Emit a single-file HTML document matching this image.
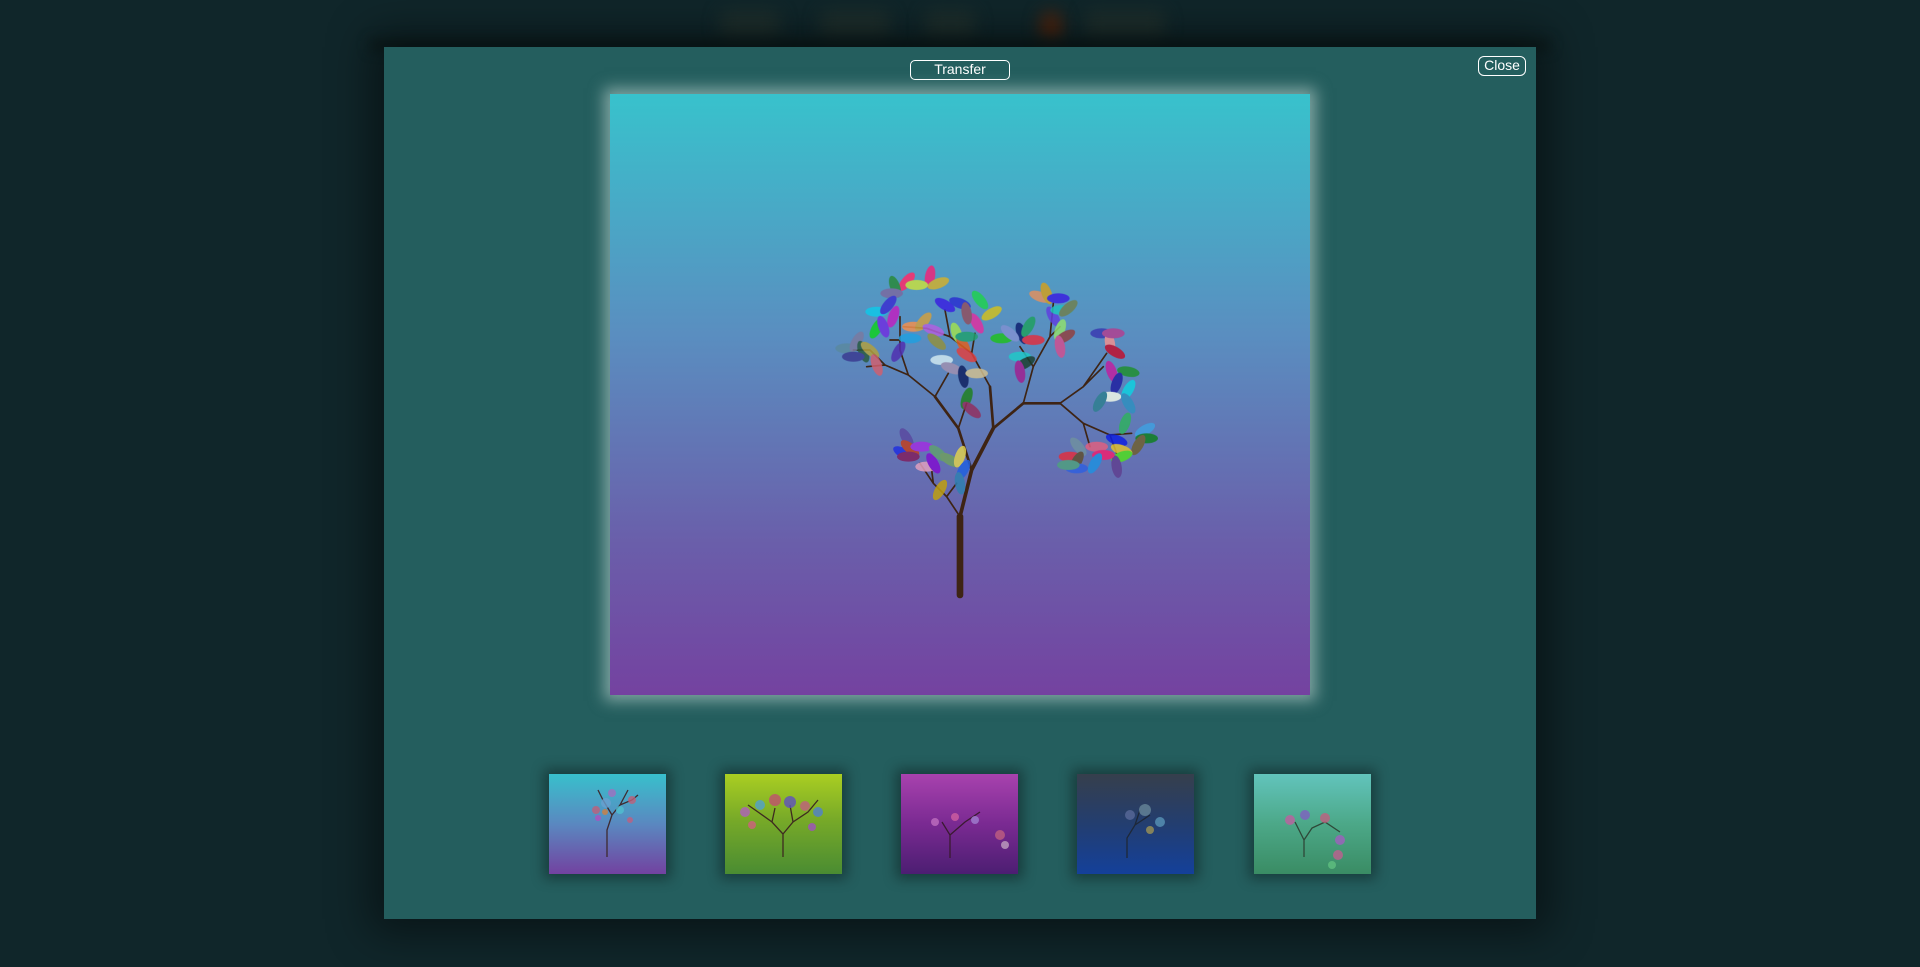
<!DOCTYPE html>
<html><head><meta charset="utf-8"><style>
html,body{margin:0;padding:0;width:1920px;height:967px;overflow:hidden;background:#10262a;font-family:"Liberation Sans",sans-serif}
.blur{position:absolute;filter:blur(8px);border-radius:8px}
.modal{position:absolute;left:384px;top:47px;width:1152px;height:872px;background:#245e5e;box-shadow:0 0 40px 14px rgba(0,0,0,.45)}
.btn{position:absolute;border:1.5px solid #fff;border-radius:5px;color:#fff;font-size:14px;text-align:center;box-sizing:border-box;line-height:17px}
.main{position:absolute;left:610px;top:94px;width:700px;height:601px;background:linear-gradient(#38c2cc,#5a8ec0 40%,#6a5eaa 75%,#7442a0);box-shadow:0 0 14px 6px rgba(200,220,215,.55)}
.th{position:absolute;top:774px;width:117px;height:100px;box-shadow:0 0 12px 5px rgba(0,0,0,.35)}
.lv ellipse{rx:34px;ry:15px}
</style></head><body>
<div class="blur" style="left:720px;top:10px;width:60px;height:30px;background:#1d2e2c"></div>
<div class="blur" style="left:820px;top:10px;width:70px;height:30px;background:#1d2e2c"></div>
<div class="blur" style="left:925px;top:10px;width:50px;height:30px;background:#1d2e2c"></div>
<div class="blur" style="left:1040px;top:12px;width:22px;height:30px;background:#4a2410"></div>
<div class="blur" style="left:1085px;top:10px;width:80px;height:30px;background:#1d2e2c"></div>
<div style="position:absolute;left:370px;top:40px;width:1180px;height:10px;background:#0c1a1a;filter:blur(6px)"></div>
<div class="modal"></div>
<div class="btn" style="left:910px;top:60px;width:100px;height:20px">Transfer</div>
<div class="btn" style="left:1478px;top:56px;width:48px;height:20px;border-radius:6px">Close</div>
<div class="main"></div>
<svg style="position:absolute;left:0;top:0" width="1920" height="967">
<g transform="translate(820,250) scale(0.3333)" stroke="#3e2414" fill="none" stroke-linecap="round" stroke-linejoin="round">
<path d="M420 1035V800" stroke-width="20"/>
<path d="M420 800L455 660L520 535" stroke-width="11"/>
<path d="M520 535L510 410M520 535L610 460L720 460" stroke-width="8"/>
<path d="M455 660L415 535L345 440" stroke-width="8"/>
<path d="M510 410L455 310L390 260L320 235L250 230M455 310L465 250M390 260L375 180M720 460L790 410L860 310M790 410L850 350M720 460L790 520L870 555L935 550M790 520L810 590M870 555L890 610M610 460L640 350L690 260L700 160M640 350L600 290M690 260L720 230M345 440L265 375L195 345L140 350M195 345L150 300L100 300M265 375L240 300L240 200M240 270L210 270M415 535L440 460M345 440L385 370M420 800L380 740L340 700L335 660M380 740L410 700M340 700L300 640" stroke-width="5"/>
</g>
<g class="lv" transform="translate(820,250) scale(0.3333)" opacity="0.85">
<ellipse cx="260" cy="95" rx="28" ry="11" fill="#ff2a6a" transform="rotate(-50 260 95)"/>
<ellipse cx="330" cy="80" rx="30" ry="12" fill="#f0247a" transform="rotate(-80 330 80)"/>
<ellipse cx="355" cy="100" rx="28" ry="10" fill="#d0b030" transform="rotate(-20 355 100)"/>
<ellipse cx="225" cy="110" rx="26" ry="10" fill="#2a8a3a" transform="rotate(70 225 110)"/>
<ellipse cx="215" cy="130" rx="26" ry="10" fill="#7a6aa0"/>
<ellipse cx="290" cy="105" rx="26" ry="10" fill="#c8e040"/>
<ellipse cx="375" cy="165" rx="30" ry="11" fill="#3a20e0" transform="rotate(30 375 165)"/>
<ellipse cx="420" cy="160" rx="28" ry="10" fill="#2a30d0" transform="rotate(20 420 160)"/>
<ellipse cx="480" cy="150" rx="30" ry="12" fill="#20d050" transform="rotate(50 480 150)"/>
<ellipse cx="515" cy="190" rx="28" ry="11" fill="#d0c020" transform="rotate(-30 515 190)"/>
<ellipse cx="470" cy="220" rx="28" ry="10" fill="#e030a0" transform="rotate(60 470 220)"/>
<ellipse cx="440" cy="190" rx="26" ry="10" fill="#905060" transform="rotate(80 440 190)"/>
<ellipse cx="170" cy="185" rx="30" ry="11" fill="#10c8e8"/>
<ellipse cx="205" cy="165" rx="26" ry="10" fill="#3a30d0" transform="rotate(-50 205 165)"/>
<ellipse cx="220" cy="200" rx="28" ry="10" fill="#c020c0" transform="rotate(-70 220 200)"/>
<ellipse cx="170" cy="235" rx="28" ry="11" fill="#10d020" transform="rotate(-60 170 235)"/>
<ellipse cx="190" cy="230" rx="26" ry="10" fill="#7030e0" transform="rotate(70 190 230)"/>
<ellipse cx="280" cy="230" rx="30" ry="11" fill="#f09050"/>
<ellipse cx="310" cy="215" rx="26" ry="10" fill="#d0a040" transform="rotate(-50 310 215)"/>
<ellipse cx="340" cy="240" rx="30" ry="11" fill="#b060e0" transform="rotate(20 340 240)"/>
<ellipse cx="270" cy="265" rx="26" ry="10" fill="#20a0e0"/>
<ellipse cx="350" cy="275" rx="28" ry="10" fill="#909040" transform="rotate(40 350 275)"/>
<ellipse cx="410" cy="250" rx="28" ry="10" fill="#a0e050" transform="rotate(70 410 250)"/>
<ellipse cx="430" cy="285" rx="28" ry="11" fill="#e06020" transform="rotate(60 430 285)"/>
<ellipse cx="440" cy="315" rx="28" ry="10" fill="#e04040" transform="rotate(30 440 315)"/>
<ellipse cx="440" cy="260" rx="24" ry="9" fill="#20a070"/>
<ellipse cx="80" cy="295" rx="30" ry="11" fill="#5a8aa0"/>
<ellipse cx="110" cy="275" rx="28" ry="10" fill="#7a7aa0" transform="rotate(-60 110 275)"/>
<ellipse cx="130" cy="305" rx="28" ry="11" fill="#2a5a40" transform="rotate(70 130 305)"/>
<ellipse cx="150" cy="300" rx="26" ry="10" fill="#b0a040" transform="rotate(40 150 300)"/>
<ellipse cx="170" cy="345" rx="26" ry="10" fill="#d06070" transform="rotate(70 170 345)"/>
<ellipse cx="100" cy="320" rx="26" ry="10" fill="#3a3a90"/>
<ellipse cx="235" cy="305" rx="26" ry="10" fill="#5030b0" transform="rotate(-60 235 305)"/>
<ellipse cx="365" cy="330" rx="30" ry="11" fill="#d0e8f0"/>
<ellipse cx="395" cy="355" rx="28" ry="10" fill="#a090b0" transform="rotate(20 395 355)"/>
<ellipse cx="430" cy="380" rx="28" ry="12" fill="#102060" transform="rotate(80 430 380)"/>
<ellipse cx="470" cy="370" rx="24" ry="10" fill="#d0c090"/>
<ellipse cx="440" cy="445" rx="28" ry="11" fill="#208020" transform="rotate(-70 440 445)"/>
<ellipse cx="455" cy="480" rx="26" ry="10" fill="#903060" transform="rotate(40 455 480)"/>
<ellipse cx="545" cy="265" rx="30" ry="11" fill="#20c020"/>
<ellipse cx="605" cy="250" rx="30" ry="12" fill="#102070" transform="rotate(70 605 250)"/>
<ellipse cx="640" cy="270" rx="28" ry="11" fill="#e03040"/>
<ellipse cx="570" cy="250" rx="26" ry="10" fill="#8090d0" transform="rotate(40 570 250)"/>
<ellipse cx="625" cy="230" rx="24" ry="10" fill="#20a060" transform="rotate(-60 625 230)"/>
<ellipse cx="600" cy="320" rx="30" ry="12" fill="#20c8c8"/>
<ellipse cx="615" cy="340" rx="28" ry="11" fill="#1a4030" transform="rotate(-30 615 340)"/>
<ellipse cx="600" cy="365" rx="24" ry="10" fill="#a02090" transform="rotate(80 600 365)"/>
<ellipse cx="660" cy="140" rx="30" ry="11" fill="#e09060" transform="rotate(20 660 140)"/>
<ellipse cx="680" cy="130" rx="28" ry="11" fill="#d0a020" transform="rotate(70 680 130)"/>
<ellipse cx="715" cy="145" rx="26" ry="10" fill="#3a20e0"/>
<ellipse cx="700" cy="200" rx="28" ry="11" fill="#6040e0" transform="rotate(60 700 200)"/>
<ellipse cx="725" cy="180" rx="26" ry="10" fill="#20c0c0"/>
<ellipse cx="745" cy="175" rx="24" ry="10" fill="#708050" transform="rotate(-40 745 175)"/>
<ellipse cx="720" cy="240" rx="30" ry="11" fill="#90e070" transform="rotate(-70 720 240)"/>
<ellipse cx="735" cy="260" rx="28" ry="11" fill="#904040" transform="rotate(-30 735 260)"/>
<ellipse cx="720" cy="290" rx="26" ry="10" fill="#d05090" transform="rotate(80 720 290)"/>
<ellipse cx="845" cy="250" rx="28" ry="10" fill="#3a3ab0"/>
<ellipse cx="870" cy="280" rx="28" ry="12" fill="#f09090" transform="rotate(80 870 280)"/>
<ellipse cx="885" cy="305" rx="26" ry="10" fill="#c01030" transform="rotate(30 885 305)"/>
<ellipse cx="880" cy="250" rx="24" ry="10" fill="#b04090"/>
<ellipse cx="875" cy="365" rx="28" ry="11" fill="#c020a0" transform="rotate(70 875 365)"/>
<ellipse cx="925" cy="365" rx="30" ry="11" fill="#209030" transform="rotate(10 925 365)"/>
<ellipse cx="890" cy="400" rx="26" ry="11" fill="#2020a0" transform="rotate(-70 890 400)"/>
<ellipse cx="870" cy="440" rx="30" ry="12" fill="#f0f8e8"/>
<ellipse cx="925" cy="420" rx="28" ry="11" fill="#10d0e0" transform="rotate(-60 925 420)"/>
<ellipse cx="925" cy="460" rx="24" ry="10" fill="#3090c0" transform="rotate(60 925 460)"/>
<ellipse cx="840" cy="455" rx="24" ry="10" fill="#308090" transform="rotate(-60 840 455)"/>
<ellipse cx="915" cy="520" rx="28" ry="11" fill="#30b060" transform="rotate(-70 915 520)"/>
<ellipse cx="975" cy="540" rx="30" ry="11" fill="#40a0e0" transform="rotate(-30 975 540)"/>
<ellipse cx="980" cy="565" rx="30" ry="11" fill="#108020"/>
<ellipse cx="955" cy="585" rx="26" ry="11" fill="#706030" transform="rotate(-60 955 585)"/>
<ellipse cx="890" cy="570" rx="28" ry="11" fill="#1020e0" transform="rotate(20 890 570)"/>
<ellipse cx="905" cy="600" rx="28" ry="11" fill="#e0c030" transform="rotate(20 905 600)"/>
<ellipse cx="905" cy="620" rx="26" ry="10" fill="#50e020" transform="rotate(-20 905 620)"/>
<ellipse cx="890" cy="650" rx="24" ry="10" fill="#604090" transform="rotate(80 890 650)"/>
<ellipse cx="830" cy="590" rx="30" ry="11" fill="#e06080"/>
<ellipse cx="850" cy="615" rx="26" ry="11" fill="#f02070"/>
<ellipse cx="825" cy="640" rx="26" ry="10" fill="#2090e0" transform="rotate(-60 825 640)"/>
<ellipse cx="775" cy="590" rx="26" ry="10" fill="#7090a0" transform="rotate(50 775 590)"/>
<ellipse cx="750" cy="620" rx="28" ry="11" fill="#e03040"/>
<ellipse cx="770" cy="635" rx="28" ry="11" fill="#605030" transform="rotate(-60 770 635)"/>
<ellipse cx="770" cy="655" rx="26" ry="10" fill="#3060e0"/>
<ellipse cx="745" cy="645" rx="22" ry="9" fill="#50a080"/>
<ellipse cx="260" cy="565" rx="28" ry="11" fill="#5a4aa0" transform="rotate(60 260 565)"/>
<ellipse cx="250" cy="610" rx="30" ry="12" fill="#2030e0" transform="rotate(30 250 610)"/>
<ellipse cx="270" cy="595" rx="28" ry="11" fill="#c04020" transform="rotate(40 270 595)"/>
<ellipse cx="265" cy="620" rx="28" ry="11" fill="#802060"/>
<ellipse cx="305" cy="590" rx="26" ry="10" fill="#a030e0"/>
<ellipse cx="320" cy="650" rx="26" ry="10" fill="#e0a0c0"/>
<ellipse cx="340" cy="640" rx="28" ry="11" fill="#8010d0" transform="rotate(60 340 640)"/>
<ellipse cx="355" cy="610" rx="28" ry="11" fill="#60a070" transform="rotate(40 355 610)"/>
<ellipse cx="390" cy="630" rx="28" ry="11" fill="#70a060" transform="rotate(30 390 630)"/>
<ellipse cx="420" cy="620" rx="28" ry="11" fill="#e0d050" transform="rotate(-70 420 620)"/>
<ellipse cx="430" cy="660" rx="26" ry="10" fill="#2060e0" transform="rotate(-60 430 660)"/>
<ellipse cx="420" cy="700" rx="24" ry="10" fill="#3080b0" transform="rotate(80 420 700)"/>
<ellipse cx="360" cy="720" rx="28" ry="11" fill="#c0a010" transform="rotate(-60 360 720)"/>
</g>
</svg>
<div class="th" style="left:549px;background:linear-gradient(#38c0cc,#5a88c0 50%,#7242a0)"></div>
<div class="th" style="left:725px;background:linear-gradient(#aace22,#78aa28 45%,#4a8c32)"></div>
<div class="th" style="left:901px;background:linear-gradient(#a842ae,#7a2a92 50%,#4c1e72)"></div>
<div class="th" style="left:1077px;background:linear-gradient(#363f4c,#233e70 50%,#14409a)"></div>
<div class="th" style="left:1254px;background:linear-gradient(#62c4bc,#4ca888 50%,#3a8c64)"></div>
<svg style="position:absolute;left:0;top:0" width="1920" height="967" fill="none" stroke-width="1.3">
<g stroke="#3e2a30"><path d="M607 857V830L612 815L620 805M612 815L603 800L598 790M620 805L628 790M620 805L632 800L638 795"/></g>
<g opacity=".8"><circle cx="596" cy="810" r="4" fill="#c0607a"/><circle cx="606" cy="803" r="5" fill="#6aa0d0"/><circle cx="598" cy="818" r="3" fill="#b050c0"/><circle cx="620" cy="810" r="4" fill="#50c0d0"/><circle cx="632" cy="800" r="4" fill="#c0607a"/><circle cx="605" cy="812" r="3" fill="#d08040"/><circle cx="612" cy="793" r="4" fill="#a070c0"/><circle cx="630" cy="820" r="3" fill="#c06080"/></g>
<g stroke="#3e2a20"><path d="M783 857V834L772 822L758 812L748 805M783 834L793 822L808 812L818 800M793 822L790 805M772 822L775 808"/></g>
<g opacity=".8"><circle cx="745" cy="812" r="5" fill="#b060c0"/><circle cx="760" cy="805" r="5" fill="#50a0d0"/><circle cx="775" cy="800" r="6" fill="#c05070"/><circle cx="790" cy="802" r="6" fill="#6050c0"/><circle cx="805" cy="806" r="5" fill="#c06080"/><circle cx="818" cy="812" r="5" fill="#5080d0"/><circle cx="752" cy="825" r="4" fill="#d06080"/><circle cx="812" cy="827" r="4" fill="#a050c0"/></g>
<g stroke="#3a1a30"><path d="M950 858V835L942 822M950 835L965 822L980 812"/></g>
<g opacity=".8"><circle cx="935" cy="822" r="4" fill="#c070c0"/><circle cx="955" cy="817" r="4" fill="#d060a0"/><circle cx="975" cy="820" r="4" fill="#a080d0"/><circle cx="1000" cy="835" r="5" fill="#c06080"/><circle cx="1005" cy="845" r="4" fill="#c0a0c0"/></g>
<g stroke="#1e2838"><path d="M1127 858V838L1135 825L1140 810M1135 825L1150 815"/></g>
<g opacity=".7"><circle cx="1130" cy="815" r="5" fill="#6070a0"/><circle cx="1145" cy="810" r="6" fill="#7090a0"/><circle cx="1160" cy="822" r="5" fill="#60a0c0"/><circle cx="1150" cy="830" r="4" fill="#b0a050"/></g>
<g stroke="#2e4838"><path d="M1304 857V840L1295 822M1304 840L1312 828L1325 822L1340 832"/></g>
<g opacity=".8"><circle cx="1290" cy="820" r="5" fill="#c060a0"/><circle cx="1305" cy="815" r="5" fill="#8060c0"/><circle cx="1325" cy="818" r="5" fill="#c06080"/><circle cx="1340" cy="840" r="5" fill="#a060c0"/><circle cx="1338" cy="855" r="5" fill="#c06090"/><circle cx="1332" cy="865" r="4" fill="#60c080"/></g>
</svg>
</body></html>
